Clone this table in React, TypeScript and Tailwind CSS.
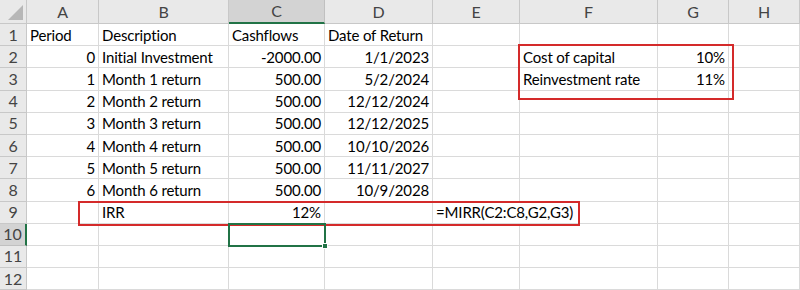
const COLS = ['A', 'B', 'C', 'D', 'E', 'F', 'G', 'H'];

type Cell = { text: string; align?: 'left' | 'right'; overflow?: boolean };
type Row = Record<string, Cell>;

const rows: Row[] = [
  { A: { text: 'Period' }, B: { text: 'Description' }, C: { text: 'Cashflows' }, D: { text: 'Date of Return' } },
  { A: { text: '0', align: 'right' }, B: { text: 'Initial Investment' }, C: { text: '-2000.00', align: 'right' }, D: { text: '1/1/2023', align: 'right' }, F: { text: 'Cost of capital' }, G: { text: '10%', align: 'right' } },
  { A: { text: '1', align: 'right' }, B: { text: 'Month 1 return' }, C: { text: '500.00', align: 'right' }, D: { text: '5/2/2024', align: 'right' }, F: { text: 'Reinvestment rate' }, G: { text: '11%', align: 'right' } },
  { A: { text: '2', align: 'right' }, B: { text: 'Month 2 return' }, C: { text: '500.00', align: 'right' }, D: { text: '12/12/2024', align: 'right' } },
  { A: { text: '3', align: 'right' }, B: { text: 'Month 3 return' }, C: { text: '500.00', align: 'right' }, D: { text: '12/12/2025', align: 'right' } },
  { A: { text: '4', align: 'right' }, B: { text: 'Month 4 return' }, C: { text: '500.00', align: 'right' }, D: { text: '10/10/2026', align: 'right' } },
  { A: { text: '5', align: 'right' }, B: { text: 'Month 5 return' }, C: { text: '500.00', align: 'right' }, D: { text: '11/11/2027', align: 'right' } },
  { A: { text: '6', align: 'right' }, B: { text: 'Month 6 return' }, C: { text: '500.00', align: 'right' }, D: { text: '10/9/2028', align: 'right' } },
  { B: { text: 'IRR' }, C: { text: '12%', align: 'right' }, E: { text: '=MIRR(C2:C8,G2,G3)', overflow: true } },
  {},
  {},
  {},
];

export default function App() {
  return (
    <div className="relative w-[800px] h-[290px] overflow-hidden bg-white font-['Lato',sans-serif] text-[15px] tracking-[-0.15px] text-black">
      <div className="grid grid-cols-[27px_72px_130px_96px_108px_87px_138px_71px_1fr] grid-rows-[24px_repeat(12,22.2px)]">
        {/* corner */}
        <div className="relative bg-[#e9e9e9] border-r border-b border-[#c8c8c8]">
          <div className="absolute right-[3px] bottom-[3px] w-0 h-0 border-l-[15px] border-l-transparent border-b-[15px] border-b-[#b7b7b7]" />
        </div>
        {COLS.map((c) => (
          <div
            key={c}
            className={
              c === 'C'
                ? 'flex items-center justify-center bg-[#d3d3d3] border-r border-[#c0c0c0] border-b-2 border-b-[#217346] text-[16px] text-[#444]'
                : 'flex items-center justify-center bg-[#e9e9e9] border-r border-b border-[#c8c8c8] text-[16px] text-[#444]'
            }
          >
            {c}
          </div>
        ))}

        {rows.map((row, i) => (
          <Line key={i} n={i + 1} row={row} />
        ))}
      </div>

      {/* red highlight boxes */}
      <div className="absolute left-[518px] top-[44px] w-[216px] h-[56px] border-2 border-[#d42a2a] pointer-events-none" />
      <div className="absolute left-[78px] top-[201px] w-[502px] h-[25px] border-2 border-[#d42a2a] pointer-events-none" />

      {/* active cell C10 */}
      <div className="absolute left-[228px] top-[223px] w-[98px] h-[24px] border-2 border-[#217346] pointer-events-none">
        <div className="absolute -right-[4px] -bottom-[4px] w-[6px] h-[6px] bg-[#217346] border border-white" />
      </div>
    </div>
  );
}

function Line({ n, row }: { n: number; row: Row }) {
  const active = n === 10;
  return (
    <>
      <div
        className={
          active
            ? 'flex items-center justify-center bg-[#d3d3d3] border-b border-[#c0c0c0] border-r-2 border-r-[#217346] text-[16px] text-[#444]'
            : 'flex items-center justify-center bg-[#e9e9e9] border-r border-b border-[#c8c8c8] text-[16px] text-[#444]'
        }
      >
        {n}
      </div>
      {COLS.map((c) => {
        const cell = row[c];
        const hideRight = row.E?.overflow && c === 'E';
        return (
          <div
            key={c}
            className={
              'relative flex items-center border-b border-[#dadada] ' +
              (hideRight ? '' : 'border-r ') +
              (cell?.align === 'right' ? 'justify-end pr-[3px] ' : 'pl-[3px] ') +
              (cell?.overflow ? 'overflow-visible z-10' : 'overflow-hidden')
            }
          >
            {cell && <span className="whitespace-nowrap leading-none pt-[1px]">{cell.text}</span>}
          </div>
        );
      })}
    </>
  );
}
